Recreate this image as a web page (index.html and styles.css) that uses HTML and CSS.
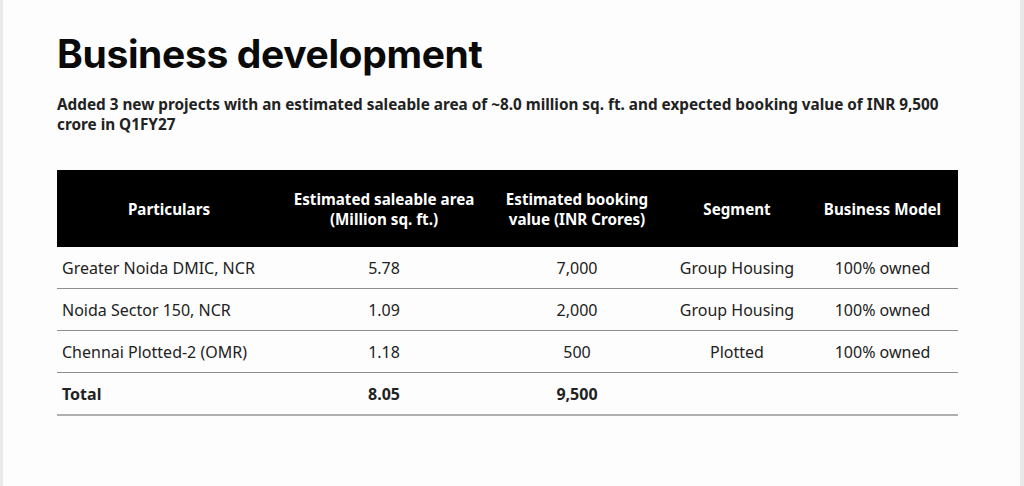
FILE: index.html
```html
<!DOCTYPE html>
<html>
<head>
<meta charset="utf-8">
<link rel="stylesheet" href="styles.css">
</head>
<body>
<div class="page">
  <h1 class="title">Business development</h1>
  <p class="lead">Added 3 new projects with an estimated saleable area of ~8.0 million sq. ft. and expected booking value of INR 9,500 crore in Q1FY27</p>
  <table class="data">
    <colgroup>
      <col class="c1"><col class="c2"><col class="c3"><col class="c4"><col class="c5">
    </colgroup>
    <thead>
      <tr>
        <th>Particulars</th>
        <th>Estimated saleable area<br>(Million sq. ft.)</th>
        <th>Estimated booking<br>value (INR Crores)</th>
        <th>Segment</th>
        <th>Business Model</th>
      </tr>
    </thead>
    <tbody>
      <tr>
        <td class="name">Greater Noida DMIC, NCR</td>
        <td>5.78</td>
        <td>7,000</td>
        <td>Group Housing</td>
        <td>100% owned</td>
      </tr>
      <tr>
        <td class="name">Noida Sector 150, NCR</td>
        <td>1.09</td>
        <td>2,000</td>
        <td>Group Housing</td>
        <td>100% owned</td>
      </tr>
      <tr>
        <td class="name">Chennai Plotted-2 (OMR)</td>
        <td>1.18</td>
        <td>500</td>
        <td>Plotted</td>
        <td>100% owned</td>
      </tr>
      <tr class="total">
        <td class="name">Total</td>
        <td>8.05</td>
        <td>9,500</td>
        <td></td>
        <td></td>
      </tr>
    </tbody>
  </table>
</div>
</body>
</html>
```

FILE: styles.css
```css
html, body {
  margin: 0;
  padding: 0;
  background: #e9e9e9;
}
.page {
  margin-left: 3px;
  width: 1017px;
  height: 486px;
  background: #fdfdfd;
  padding: 31px 0 0 54px;
  box-sizing: border-box;
  font-family: "Noto Sans", sans-serif;
  color: #1e1e1e;
}
.title {
  margin: 0;
  font-family: Inter, "Liberation Sans", sans-serif;
  font-weight: 700;
  font-size: 39px;
  line-height: 46px;
  letter-spacing: -0.35px;
  color: #0a0a0a;
}
.lead {
  margin: 17px 0 0 0;
  width: 901px;
  font-size: 15.3px;
  font-weight: 700;
  line-height: 20px;
  color: #222;
}
.data {
  margin-top: 36px;
  width: 901px;
  border-collapse: collapse;
  table-layout: fixed;
  font-size: 16px;
  color: #222;
}
.c1 { width: 224px; }
.c2 { width: 206px; }
.c3 { width: 180px; }
.c4 { width: 140px; }
.c5 { width: 151px; }
.data th {
  background: #000;
  color: #fff;
  font-size: 15.2px;
  font-weight: 700;
  line-height: 20px;
  height: 77px;
  padding: 0;
  text-align: center;
  vertical-align: middle;
}
.data td {
  height: 41px;
  padding: 0;
  text-align: center;
  vertical-align: middle;
  border-bottom: 1.5px solid #8e8e8e;
}
.data td.name {
  text-align: left;
  padding-left: 5px;
}
.data tr.total td {
  font-weight: 700;
  border-bottom: 2px solid #b0b0b0;
}
```
